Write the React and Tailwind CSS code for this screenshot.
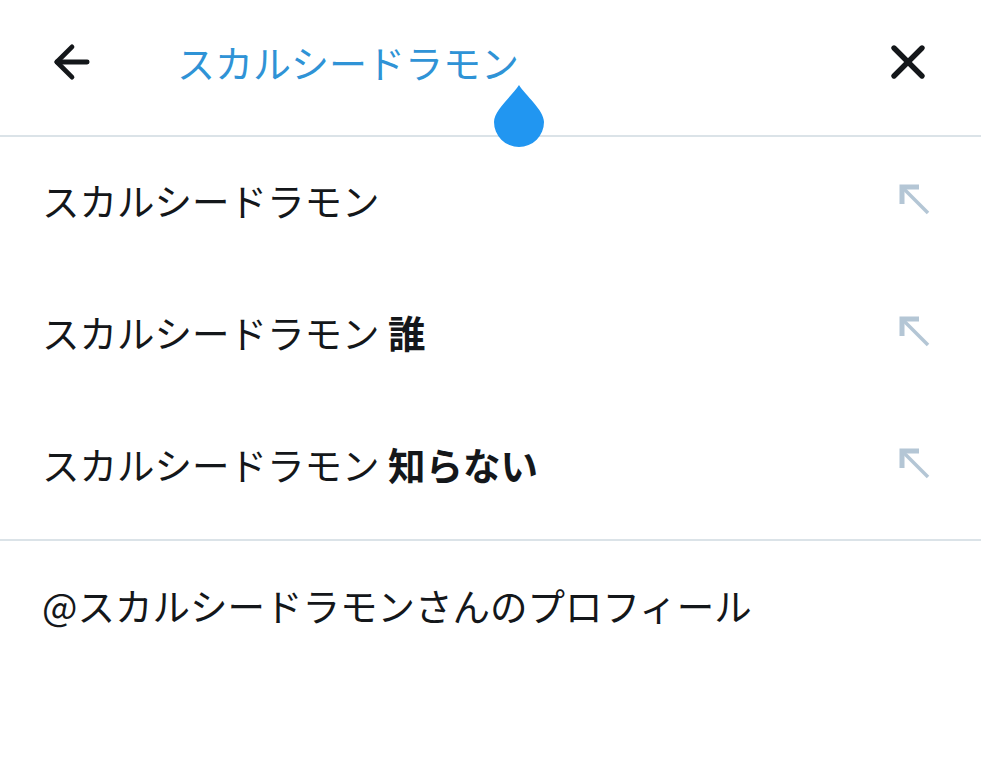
import { ArrowLeft, X } from 'lucide-react';

const font = { fontFamily: '"Noto Sans CJK JP", "Noto Sans", sans-serif' };

const suggestions = [
  { base: 'スカルシードラモン', extra: '' },
  { base: 'スカルシードラモン', extra: '誰' },
  { base: 'スカルシードラモン', extra: '知らない' },
];

const NorthWest = () => (
  <svg width="32" height="32" viewBox="0 0 32 32" fill="none" className="text-[#b4c6d5]">
    <path d="M3 20V3h17" stroke="currentColor" strokeWidth="5" />
    <path d="M5 5l24 24" stroke="currentColor" strokeWidth="3.5" />
  </svg>
);

const App = () => {
  return (
    <div className="w-[981px] h-[763px] bg-white text-[#14171a] overflow-hidden" style={font}>
      <div className="relative h-[137px] flex items-center border-b-2 border-[#dbe3e8] pb-[12px]">
        <button className="ml-[46px] w-[52px] flex items-center justify-center text-[#14171a]">
          <ArrowLeft size={54} strokeWidth={2.2} />
        </button>
        <div className="ml-[79px] text-[38px] leading-none text-[#2f93d6]">スカルシードラモン</div>
        <button className="ml-auto mr-[45px] text-[#14171a]">
          <X size={56} strokeWidth={2.3} />
        </button>
        <svg className="absolute left-[494px] top-[85px]" width="50" height="62" viewBox="0 0 50 62">
          <path d="M25 0 C31 10 50 25 50 37 A25 25 0 0 1 0 37 C0 25 19 10 25 0Z" fill="#2196f1" />
        </svg>
      </div>

      <div className="pb-[6px] border-b-2 border-[#dbe3e8]">
        {suggestions.map((s, i) => (
          <div key={i} className="h-[132px] flex items-center pl-[42px] pr-[50px] pb-[6px]">
            <div className="text-[37.5px] leading-none">
              {s.base}
              {s.extra && <span className="font-bold"> {s.extra}</span>}
            </div>
            <div className="ml-auto">
              <NorthWest />
            </div>
          </div>
        ))}
      </div>

      <div className="h-[136px] flex items-center pl-[42px] pb-[8px]">
        <div className="text-[37.5px] leading-none">@スカルシードラモンさんのプロフィール</div>
      </div>
    </div>
  );
};

export default App;
